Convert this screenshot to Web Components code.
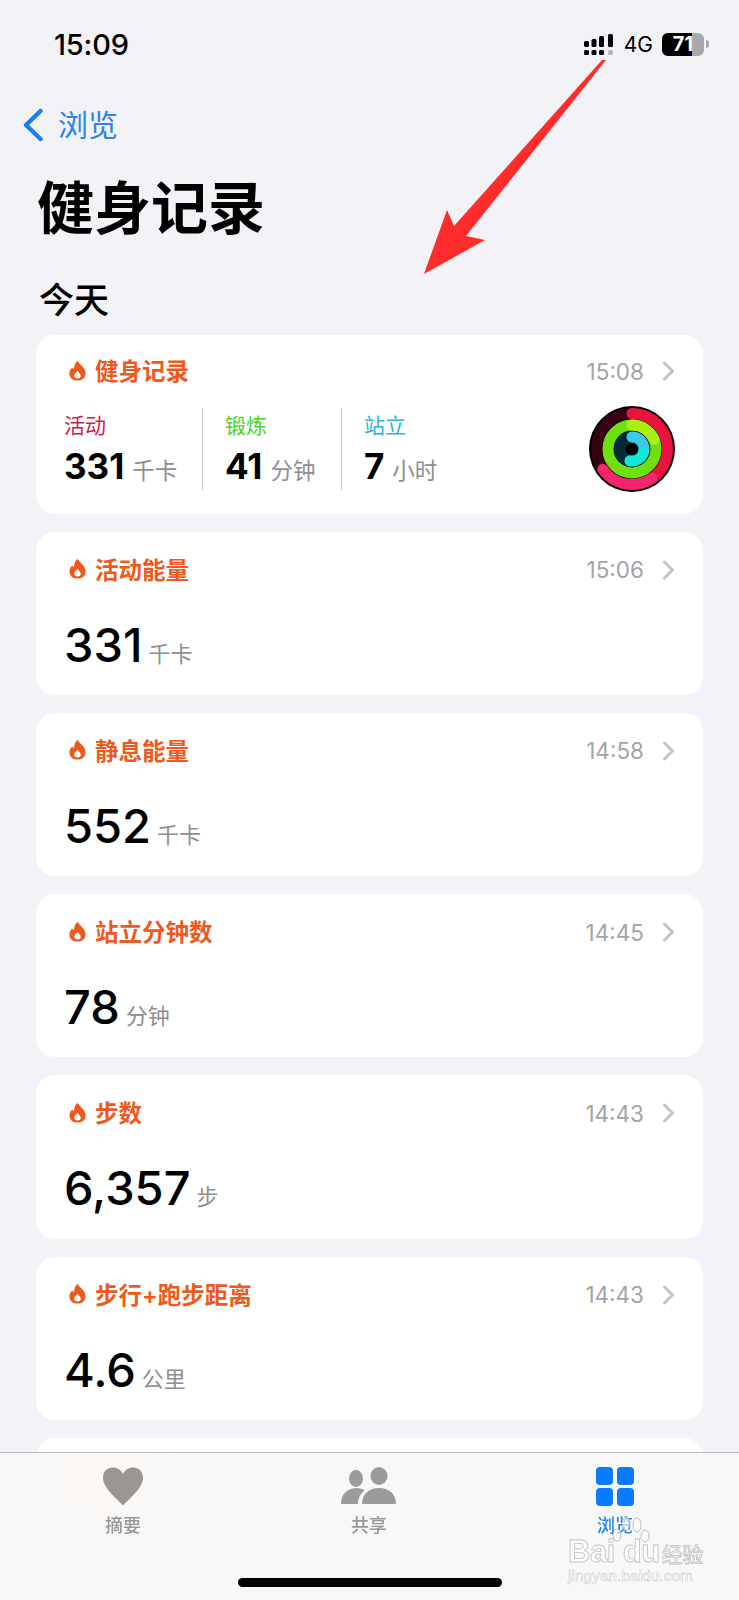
<!DOCTYPE html>
<html lang="zh">
<head>
<meta charset="utf-8">
<title>健身记录</title>
<style>
  html, body {
    margin: 0;
    height: 1600px;
    overflow: hidden;
    background: #f2f2f7;
    font-family: Inter, "Noto Sans CJK SC", sans-serif;
    color: #000;
  }
  .cards { display: flex; flex-direction: column; gap: 18px; padding: 0 36px; }
</style>
</head>
<body>
<status-bar></status-bar>
<nav-back>浏览</nav-back>
<page-title>健身记录</page-title>
<section-title>今天</section-title>

<div class="cards">
  <health-card title="健身记录" time="15:08" summary>
    <stat-col label="活动" color="#d8174b" value="331" unit="千卡" width="138"></stat-col>
    <stat-col label="锻炼" color="#4bd51c" value="41" unit="分钟" width="139" divider></stat-col>
    <stat-col label="站立" color="#2fb2d4" value="7" unit="小时" width="200" divider></stat-col>
    <activity-rings></activity-rings>
  </health-card>
  <health-card title="活动能量" time="15:06"><big-value value="331" unit="千卡"></big-value></health-card>
  <health-card title="静息能量" time="14:58"><big-value value="552" unit="千卡"></big-value></health-card>
  <health-card title="站立分钟数" time="14:45"><big-value value="78" unit="分钟"></big-value></health-card>
  <health-card title="步数" time="14:43"><big-value value="6,357" unit="步"></big-value></health-card>
  <health-card title="步行+跑步距离" time="14:43"><big-value value="4.6" unit="公里"></big-value></health-card>
  <health-card></health-card>
</div>

<tab-bar>
  <tab-item label="摘要" icon="heart"></tab-item>
  <tab-item label="共享" icon="people"></tab-item>
  <tab-item label="浏览" icon="grid" active></tab-item>
</tab-bar>
<red-arrow></red-arrow>
<baidu-mark></baidu-mark>

<script>
class StatusBar extends HTMLElement {
  constructor() {
    super();
    this.attachShadow({ mode: "open" });
    this.shadowRoot.innerHTML = `
      <style>
        :host { display: flex; align-items: center; height: 88px; padding: 0 30px 0 54px; }
        .time { font-size: 29px; font-weight: 500; letter-spacing: -0.2px; }
        .right { margin-left: auto; display: flex; align-items: center; }
        .net { font-size: 21px; font-weight: 400; margin: 0 9px 0 9px; }
        .battery { position: relative; display: flex; width: 42px; height: 23px; border-radius: 6px; overflow: hidden; background: #a9a9ad; }
        .level { width: 30px; background: #000; }
        .num { position: absolute; left: 0; right: 0; top: 0; text-align: center; color: #fff; font-size: 20px; font-weight: 700; line-height: 23px; }
        .nub { width: 3px; height: 8px; margin-left: 2px; background: #a9a9ad; border-radius: 0 3px 3px 0; }
      </style>
      <span class="time">15:09</span>
      <div class="right">
        <svg width="31" height="24" viewBox="0 0 31 24">
          <g fill="#000">
            <rect x="0" y="9" width="5" height="6" rx="1.5"/><rect x="7.5" y="7" width="5" height="8" rx="1.5"/>
            <rect x="15" y="4" width="5" height="11" rx="1.5"/><rect x="24" y="2" width="5" height="13" rx="1.5"/>
            <rect x="0" y="18" width="5" height="5" rx="1.5"/><rect x="7.5" y="18" width="5" height="5" rx="1.5"/>
            <rect x="15" y="18" width="5" height="5" rx="1.5"/>
          </g>
          <rect x="24" y="18" width="5" height="5" rx="1.5" fill="#b9b9bd"/>
        </svg>
        <span class="net">4G</span>
        <div class="battery"><div class="level"></div><div class="num">71</div></div>
        <div class="nub"></div>
      </div>`;
  }
}
customElements.define("status-bar", StatusBar);

class NavBack extends HTMLElement {
  constructor() {
    super();
    this.attachShadow({ mode: "open" });
    this.shadowRoot.innerHTML = `
      <style>
        :host { display: flex; align-items: center; gap: 14px; height: 50px; margin-top: 12px; padding-left: 22px; color: #2a86e8; font-size: 30px; }
        svg { display: block; }
        span { margin-bottom: 4px; }
      </style>
      <svg width="22" height="34" viewBox="0 0 22 34"><path d="M18.5 3 L4 17 L18.5 31" fill="none" stroke="#1a7ff0" stroke-width="4.4" stroke-linecap="round" stroke-linejoin="round"/></svg>
      <span><slot></slot></span>`;
  }
}
customElements.define("nav-back", NavBack);

class PageTitle extends HTMLElement {
  constructor() {
    super();
    this.attachShadow({ mode: "open" });
    this.shadowRoot.innerHTML = `
      <style>
        :host { display: block; margin-top: 24px; padding-left: 37px; height: 70px; font-size: 57px; line-height: 70px; font-weight: 700; }
      </style>
      <slot></slot>`;
  }
}
customElements.define("page-title", PageTitle);

class SectionTitle extends HTMLElement {
  constructor() {
    super();
    this.attachShadow({ mode: "open" });
    this.shadowRoot.innerHTML = `
      <style>
        :host { display: block; margin: 34px 0 13px; padding-left: 39px; height: 44px; font-size: 35px; line-height: 44px; font-weight: 500; }
      </style>
      <slot></slot>`;
  }
}
customElements.define("section-title", SectionTitle);

class HealthCard extends HTMLElement {
  constructor() {
    super();
    this.attachShadow({ mode: "open" });
    this.shadowRoot.innerHTML = `
      <style>
        :host { display: block; background: #fff; border-radius: 19px; height: 163.3px; box-sizing: border-box; padding: 21px 28px 0 28px; }
        :host([summary]) { height: 178.5px; padding-top: 19px; }
        .head { display: flex; align-items: center; height: 32px; }
        .flame { margin: 0 9px 0 5px; }
        .title { color: #ef5a1c; font-size: 23.5px; font-weight: 600; }
        .time { margin-left: auto; color: #a3a3a8; font-size: 22.5px; position: relative; top: 1px; }
        .chev { margin-left: 18px; position: relative; top: 1px; }
        .body { display: flex; align-items: flex-start; margin-top: 32px; }
        :host([summary]) .body { margin-top: 22px; }
      </style>
      <div class="head">
        <svg class="flame" width="17" height="21" viewBox="0 0 17 21">
          <path fill="#ef5a1c" fill-rule="evenodd" d="M8.5 0.8 C9.8 4 16.6 7.5 16.6 13.4 C16.6 18 13 20.6 8.5 20.6 C4 20.6 0.4 18 0.4 13.4 C0.4 10.8 1.6 8.8 3.2 7.4 C3.6 8.2 4.2 8.8 5 9 C5 6 6.2 3 8.5 0.8 Z M8.6 10.8 C7 12.4 5.2 13.9 5.2 15.8 C5.2 17.6 6.7 18.5 8.5 18.5 C10.3 18.5 11.8 17.6 11.8 15.8 C11.8 13.9 9.6 12.6 8.6 10.8 Z"/>
        </svg>
        <span class="title"></span>
        <span class="time"></span>
        <svg class="chev" width="13" height="20" viewBox="0 0 13 20"><path d="M2.5 2 L10.5 10 L2.5 18" fill="none" stroke="#c4c4c8" stroke-width="3" stroke-linecap="round" stroke-linejoin="round"/></svg>
      </div>
      <div class="body"><slot></slot></div>`;
  }

  connectedCallback() {
    this.shadowRoot.querySelector(".title").textContent = this.getAttribute("title") || "";
    this.shadowRoot.querySelector(".time").textContent = this.getAttribute("time") || "";
    this.removeAttribute("title");
  }
}
customElements.define("health-card", HealthCard);

class BigValue extends HTMLElement {
  constructor() {
    super();
    this.attachShadow({ mode: "open" });
    this.shadowRoot.innerHTML = `
      <style>
        :host { display: flex; align-items: baseline; gap: 6px; height: 56px; line-height: 56px; }
        .v { font-size: 47px; font-weight: 550; }
        .u { font-size: 22px; color: #8e8e93; }
      </style>
      <span class="v">${this.getAttribute("value")}</span><span class="u">${this.getAttribute("unit")}</span>`;
  }
}
customElements.define("big-value", BigValue);

class StatCol extends HTMLElement {
  constructor() {
    super();
    this.attachShadow({ mode: "open" });
    this.shadowRoot.innerHTML = `
      <style>
        :host { display: block; box-sizing: border-box; height: 82px; flex: none; }
        :host([divider]) { border-left: 1px solid #cfcfd3; padding-left: 22px; }
        .l { font-size: 21px; line-height: 36px; height: 36px; }
        .row { display: flex; align-items: baseline; gap: 8px; line-height: 44px; }
        .v { font-size: 35px; font-weight: 700; }
        .u { font-size: 22.5px; color: #8e8e93; }
      </style>
      <div class="l" style="color:${this.getAttribute("color")}">${this.getAttribute("label")}</div>
      <div class="row"><span class="v">${this.getAttribute("value")}</span><span class="u">${this.getAttribute("unit")}</span></div>`;
    this.style.width = this.getAttribute("width") + "px";
  }
}
customElements.define("stat-col", StatCol);

class ActivityRings extends HTMLElement {
  constructor() {
    super();
    this.attachShadow({ mode: "open" });
    this.shadowRoot.innerHTML = `
      <style>
        :host { display: block; flex: none; margin: -2px 0 0 auto; width: 86px; height: 86px; }
        svg { display: block; }
      </style>
      <svg width="86" height="86" viewBox="-43 -43 86 86">
        <circle r="43" fill="#000"/>
        <circle r="35.5" fill="none" stroke="#37020f" stroke-width="11"/>
        <circle r="24" fill="none" stroke="#173f02" stroke-width="11"/>
        <circle r="12" fill="none" stroke="#022a33" stroke-width="12"/>
        <g fill="none" stroke-linecap="round" transform="rotate(-90)">
          <circle r="35.5" stroke="#e8133f" stroke-width="11" pathLength="360" stroke-dasharray="150 360"/>
          <circle r="35.5" stroke="#f5246f" stroke-width="11" pathLength="360" stroke-dasharray="90 360" stroke-dashoffset="-145"/>
          <circle r="24" stroke="#6ee010" stroke-width="11"/>
          <circle r="24" stroke="#a8f013" stroke-width="11" pathLength="360" stroke-dasharray="67 360"/>
          <circle r="12" stroke="#3cc8e8" stroke-width="11" pathLength="360" stroke-dasharray="110 360"/>
          <circle r="12" stroke="#0fe8d8" stroke-width="11" pathLength="360" stroke-dasharray="80 360" stroke-dashoffset="-110"/>
        </g>
        <circle r="6" fill="#000"/>
      </svg>`;
  }
}
customElements.define("activity-rings", ActivityRings);

class TabBar extends HTMLElement {
  constructor() {
    super();
    this.attachShadow({ mode: "open" });
    this.shadowRoot.innerHTML = `
      <style>
        :host {
          position: fixed; left: 0; right: 0; bottom: 0; height: 148px; box-sizing: border-box;
          display: grid; grid-template-columns: repeat(3, 1fr); padding: 14px 1px 0 0;
          background: radial-gradient(circle at 100px 20px, #fcf8f5 0, #f8f8f9 130px);
          border-top: 1px solid #bcbcc0;
        }
        .home { position: absolute; left: 238px; top: 125px; width: 264px; height: 9px; border-radius: 5px; background: #000; }
      </style>
      <slot></slot>
      <div class="home"></div>`;
  }
}
customElements.define("tab-bar", TabBar);

const TAB_ICONS = {
  heart: `<svg width="42" height="39" viewBox="0 0 42 39"><path fill="#9b9694" d="M21 38.5 C15 32 1 21 1 11 C1 4.5 5 .5 11 .5 C15.5 .5 19 3 21 7 C23 3 26.5 .5 31 .5 C37 .5 41 4.5 41 11 C41 21 27 32 21 38.5 Z"/></svg>`,
  people: `<svg width="56" height="39" viewBox="0 0 56 39"><g fill="#9b9b9e"><ellipse cx="15" cy="11.5" rx="7" ry="8.5"/><ellipse cx="38" cy="9" rx="8.5" ry="9"/><path d="M0 37 C0 27 6 22 15 21 C19 21 22 22 23.5 23.5 C19 27 17 32 17 37 Z"/><path d="M21 37 C21 27 28 21 38 21 C48 21 55 27 55 37 Z"/></g></svg>`,
  grid: `<svg width="38" height="39" viewBox="0 0 38 39"><g fill="#0a7aff"><rect x="0" y="0" width="17" height="18" rx="4"/><rect x="21" y="0" width="17" height="18" rx="4"/><rect x="0" y="21" width="17" height="18" rx="4"/><rect x="21" y="21" width="17" height="18" rx="4"/></g></svg>`
};

class TabItem extends HTMLElement {
  constructor() {
    super();
    this.attachShadow({ mode: "open" });
    this.shadowRoot.innerHTML = `
      <style>
        :host { display: flex; flex-direction: column; align-items: center; color: #97979b; font-size: 18px; font-weight: 500; }
        :host([active]) { color: #2a86e0; }
        .ic { height: 39px; }
        .lb { margin-top: 7px; line-height: 26px; }
      </style>
      <div class="ic">${TAB_ICONS[this.getAttribute("icon")]}</div>
      <div class="lb">${this.getAttribute("label")}</div>`;
  }
}
customElements.define("tab-item", TabItem);

class RedArrow extends HTMLElement {
  constructor() {
    super();
    this.attachShadow({ mode: "open" });
    this.shadowRoot.innerHTML = `
      <style>
        :host { position: absolute; left: 0; top: 0; width: 739px; height: 300px; pointer-events: none; }
      </style>
      <svg width="739" height="300" viewBox="0 0 739 300">
        <polygon fill="#ff2c2c" points="606,60 602,60 454,226 447,210 424,274 485,240 466,236"/>
      </svg>`;
  }
}
customElements.define("red-arrow", RedArrow);

class BaiduMark extends HTMLElement {
  constructor() {
    super();
    this.attachShadow({ mode: "open" });
    this.shadowRoot.innerHTML = `
      <style>
        :host {
          position: absolute; left: 566px; top: 1537px; width: 136px; height: 48px;
          color: rgba(255,255,255,.8); font-family: "Liberation Sans", "Noto Sans CJK SC", sans-serif;
          -webkit-text-stroke: 0.8px rgba(150,150,155,.6); pointer-events: none;
        }
        .top { position: absolute; left: 2px; top: 0; font-size: 31px; font-weight: 700; line-height: 30px; height: 30px; white-space: nowrap; letter-spacing: -0.5px; }
        .cn { font-size: 21px; font-weight: 400; margin-left: 2px; }
        .url { position: absolute; left: 2px; top: 30px; font-size: 15.5px; line-height: 18px; white-space: nowrap; -webkit-text-stroke: 0.5px rgba(150,150,155,.5); }
        svg { position: absolute; left: 44px; top: -22px; }
      </style>
      <svg width="40" height="30" viewBox="0 0 40 30"><g fill="rgba(255,255,255,.6)" stroke="rgba(120,130,150,.5)"><ellipse cx="7" cy="20" rx="4" ry="6"/><ellipse cx="16" cy="9" rx="4" ry="7"/><ellipse cx="27" cy="10" rx="4" ry="7"/><ellipse cx="35" cy="21" rx="4" ry="6"/></g></svg>
      <div class="top">Bai du<span class="cn">经验</span></div>
      <div class="url">jingyan.baidu.com</div>`;
  }
}
customElements.define("baidu-mark", BaiduMark);
</script>
</body>
</html>
